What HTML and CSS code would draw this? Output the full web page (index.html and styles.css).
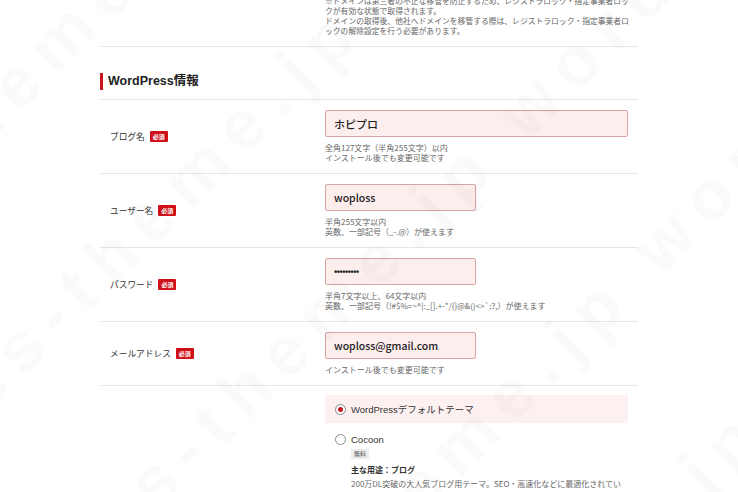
FILE: index.html
```html
<!DOCTYPE html>
<html lang="ja">
<head>
<meta charset="utf-8">
<title>WordPress情報</title>
<link rel="stylesheet" href="styles.css">
</head>
<body>
<div class="page">
  <div class="row row-note">
    <div class="label"></div>
    <div class="value">
      <p class="note">※ドメインは第三者の不正な移管を防止するため、レジストラロック・指定事業者ロッ<br>クが有効な状態で取得されます。<br>ドメインの取得後、他社へドメインを移管する際は、レジストラロック・指定事業者ロ<br>ックの解除設定を行う必要があります。</p>
    </div>
  </div>

  <h2 class="section-title">WordPress情報</h2>

  <div class="form">
    <div class="row">
      <div class="label">ブログ名<span class="req">必須</span></div>
      <div class="value">
        <div class="input input-wide">ホピプロ</div>
        <p class="hint">全角127文字（半角255文字）以内<br>インストール後でも変更可能です</p>
      </div>
    </div>
    <div class="row">
      <div class="label">ユーザー名<span class="req">必須</span></div>
      <div class="value">
        <div class="input">woploss</div>
        <p class="hint">半角255文字以内<br>英数、一部記号（_-.@）が使えます</p>
      </div>
    </div>
    <div class="row">
      <div class="label">パスワード<span class="req">必須</span></div>
      <div class="value">
        <div class="input input-pass">•••••••••</div>
        <p class="hint">半角7文字以上、64文字以内<br>英数、一部記号（!#$%=~^|:_[].+-*/{}@&amp;()&lt;&gt;`;?,）が使えます</p>
      </div>
    </div>
    <div class="row">
      <div class="label">メールアドレス<span class="req">必須</span></div>
      <div class="value">
        <div class="input">woploss@gmail.com</div>
        <p class="hint">インストール後でも変更可能です</p>
      </div>
    </div>
    <div class="row row-theme">
      <div class="label"></div>
      <div class="value">
        <div class="option option-selected">
          <span class="radio radio-on"></span>
          <span class="option-name">WordPressデフォルトテーマ</span>
        </div>
        <div class="option option-plain">
          <span class="radio"></span>
          <span class="option-name">Cocoon</span>
        </div>
        <div class="option-body">
          <span class="tag">無料</span>
          <p class="use">主な用途：ブログ</p>
          <p class="desc">200万DL突破の大人気ブログ用テーマ。SEO・高速化などに最適化されてい<br>ます。</p>
        </div>
      </div>
    </div>
  </div>
</div>

<div class="watermark" aria-hidden="true">
  <div class="wm-inner">
    <div class="wm-line">wordpress-theme.jp wordpress-theme.jp wordpress-theme.jp</div>
    <div class="wm-line">wordpress-theme.jp wordpress-theme.jp wordpress-theme.jp</div>
    <div class="wm-line">wordpress-theme.jp wordpress-theme.jp wordpress-theme.jp</div>
    <div class="wm-line">wordpress-theme.jp wordpress-theme.jp wordpress-theme.jp</div>
    <div class="wm-line">wordpress-theme.jp wordpress-theme.jp wordpress-theme.jp</div>
    <div class="wm-line">wordpress-theme.jp wordpress-theme.jp wordpress-theme.jp</div>
  </div>
</div>
</body>
</html>
```

FILE: styles.css
```css
html, body {
  margin: 0;
  padding: 0;
  background: #fff;
}
body {
  font-family: "Noto Sans CJK JP", "Noto Sans", sans-serif;
  color: #333;
  height: 492px;
  overflow: hidden;
  position: relative;
}
p { margin: 0; }

.page {
  width: 538px;
  margin: 0 auto;
}

.row {
  display: grid;
  grid-template-columns: 225px 1fr;
  border-bottom: 1px solid #e6e6e6;
  padding: 10px 10px 10px 0;
}
.row-note {
  margin-top: -4px;
  padding-top: 0;
  padding-bottom: 10px;
}
.note {
  font-size: 7.8px;
  line-height: 10px;
  color: #666;
  white-space: nowrap;
}

.section-title {
  margin: 26px 0 9px;
  border-left: 3px solid #c8161d;
  padding-left: 5px;
  height: 17px;
  line-height: 17px;
  font-size: 12.5px;
  font-weight: 700;
  color: #222;
  font-family: "Liberation Sans", "Noto Sans CJK JP", sans-serif;
}

.form {
  border-top: 1px solid #e6e6e6;
}

.label {
  display: flex;
  align-items: center;
  padding-left: 10px;
  font-size: 8.7px;
  color: #333;
}
.req {
  display: inline-block;
  margin-left: 5px;
  background: #cf1018;
  color: #fff;
  font-size: 6px;
  font-weight: 700;
  line-height: 11px;
  height: 11px;
  padding: 0 3px;
  border-radius: 1px;
}

.input {
  box-sizing: border-box;
  width: 151px;
  height: 27px;
  border: 1px solid #d7a3a5;
  border-radius: 2px;
  background: #fdeeee;
  padding: 0 8px;
  display: flex;
  align-items: center;
  font-family: "Noto Sans CJK JP", sans-serif;
  font-size: 10.5px;
  font-weight: 500;
  color: #222;
}
.input-wide {
  width: 303px;
  font-size: 11px;
}
.input-pass {
  font-family: "Liberation Sans", sans-serif;
  font-size: 9px;
  font-weight: 700;
  letter-spacing: -0.4px;
}

.hint {
  margin-top: 6px;
  font-size: 8px;
  line-height: 10px;
  color: #666;
  white-space: nowrap;
}

.row-theme {
  border-bottom: none;
  padding-top: 9px;
}
.option {
  display: flex;
  align-items: center;
  gap: 5px;
  height: 28px;
  padding-left: 10px;
  font-size: 9.5px;
  color: #333;
}
.option-selected {
  background: #fdf0f0;
}
.option-plain {
  height: 14px;
  margin-top: 9px;
}
.option-name {
  font-family: "Liberation Sans", "Noto Sans CJK JP", sans-serif;
}
.radio {
  box-sizing: border-box;
  width: 11px;
  height: 11px;
  border: 1px solid #8a8a8a;
  border-radius: 50%;
  background: #fff;
  display: flex;
  align-items: center;
  justify-content: center;
}
.radio-on::after {
  content: "";
  width: 5px;
  height: 5px;
  border-radius: 50%;
  background: #c8161d;
}
.option-body {
  display: flex;
  flex-direction: column;
  align-items: flex-start;
  padding-left: 26px;
  margin-top: 3px;
}
.tag {
  display: block;
  background: #ececec;
  color: #555;
  font-size: 6px;
  line-height: 10px;
  padding: 0 3px;
  border-radius: 1px;
}
.use {
  margin-top: 4px;
  font-size: 8px;
  line-height: 14px;
  font-weight: 700;
  color: #333;
}
.desc {
  font-size: 8px;
  line-height: 14px;
  color: #666;
  white-space: nowrap;
}

.watermark {
  position: absolute;
  inset: 0;
  overflow: hidden;
  pointer-events: none;
}
.wm-inner {
  position: absolute;
  left: -300px;
  top: -200px;
  width: 1400px;
  transform: rotate(-45deg);
  transform-origin: 50% 50%;
}
.wm-line {
  font-family: "Liberation Sans", sans-serif;
  font-weight: 700;
  font-size: 70px;
  line-height: 190px;
  letter-spacing: 14px;
  color: rgba(0, 0, 0, 0.02);
  white-space: nowrap;
}
```
